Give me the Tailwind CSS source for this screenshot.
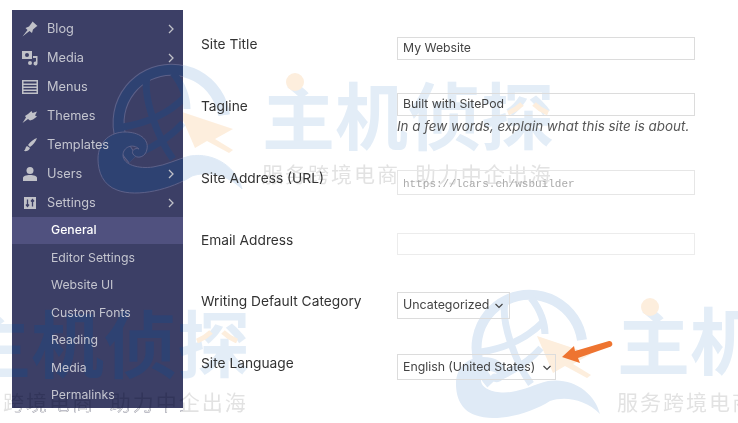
<!doctype html>
<html lang="en"><head><meta charset="utf-8"><title>Settings</title>
<script src="https://cdn.jsdelivr.net/npm/@tailwindcss/browser@4"></script></head>
<body class="bg-white">
<div class="relative w-[738px] h-[423px] overflow-hidden bg-white flex items-start blur-[0.3px] font-['Inter','Open_Sans',sans-serif]">

  <aside class="ml-3 mt-[10px] w-[171px] h-[398px] shrink-0 overflow-hidden bg-[#3c3f66] text-[#c4c5cf]">
    <ul class="relative z-20 pt-[4px] text-[12.75px]">
      <li class="h-[29px] flex items-center pl-[10px] pr-[8px] gap-[9px]"><svg class="w-4 h-4" viewBox="0 0 16 16" fill="#c0c1c8"><path d="M.5 15.500l5-6.500-2-2 3.500-1.500L10 1.500l.5-1 5 4.500-1 .5-3.500 3-1 3.500-2.500-2z"/></svg><span class="flex-1">Blog</span><svg class="w-2 h-2.5" viewBox="0 0 8 10" fill="none" stroke="#c0c1c8" stroke-width="1.300"><path d="M2 1l4 4-4 4"/></svg></li>
      <li class="h-[29px] flex items-center pl-[10px] pr-[8px] gap-[9px]"><svg class="w-4 h-4" viewBox="0 0 16 16" fill="#c0c1c8"><path d="M0 1h10v8H0z"/><circle cx="5" cy="5" r="2" fill="#3c3f66"/><path d="M11 6h4.500v7.500a2 2 0 1 1-1.500-2V8h-3z"/><circle cx="8" cy="13" r="2"/></svg><span class="flex-1">Media</span><svg class="w-2 h-2.5" viewBox="0 0 8 10" fill="none" stroke="#c0c1c8" stroke-width="1.300"><path d="M2 1l4 4-4 4"/></svg></li>
      <li class="h-[29px] flex items-center pl-[10px] pr-[8px] gap-[9px]"><svg class="w-4 h-4" viewBox="0 0 16 16" fill="#c0c1c8"><path fill-rule="evenodd" d="M0 1h16v14H0zM1.500 2.500v2h13v-2zM1.500 6v1.500h13V6zM1.500 9v1.500h13V9zM1.500 12v1.500h13V12z"/></svg><span class="flex-1">Menus</span></li>
      <li class="h-[29px] flex items-center pl-[10px] pr-[8px] gap-[9px]"><svg class="w-4 h-4" viewBox="0 0 16 16" fill="#c0c1c8"><path d="M.5 15l3.500-5.500L3 8l3-2 3.500-3 1 2 4.500-1.500-2 4 2 1-4 3-3 1-2-1.500z"/></svg><span class="flex-1">Themes</span></li>
      <li class="h-[29px] flex items-center pl-[10px] pr-[8px] gap-[9px]"><svg class="w-4 h-4" viewBox="0 0 16 16" fill="#c0c1c8"><path d="M15 1c-3 1-7 4-9 7l2 2c3-2 6-6 7-9zM5 9c-2 1-1 3-3 5 2 .5 5 0 6-3z"/></svg><span class="flex-1">Templates</span></li>
      <li class="h-[29px] flex items-center pl-[10px] pr-[8px] gap-[9px]"><svg class="w-4 h-4" viewBox="0 0 16 16" fill="#c0c1c8"><circle cx="8" cy="4.500" r="3.500"/><path d="M1 15v-3c0-2 3-3 7-3s7 1 7 3v3z"/></svg><span class="flex-1">Users</span><svg class="w-2 h-2.5" viewBox="0 0 8 10" fill="none" stroke="#c0c1c8" stroke-width="1.300"><path d="M2 1l4 4-4 4"/></svg></li>
      <li class="h-[29px] flex items-center pl-[10px] pr-[8px] gap-[9px]"><svg class="w-4 h-4" viewBox="0 0 16 16"><path fill="#c0c1c8" d="M2 2h12v12H2z"/><path stroke="#3c3f66" stroke-width="1.300" fill="none" d="M5.500 4.500v7M4 9.500l1.500 2 1.500-2M10.500 11.500v-7M9 6.500l1.500-2 1.500 2"/></svg><span class="flex-1">Settings</span><svg class="w-2 h-2.5" viewBox="0 0 8 10" fill="none" stroke="#c0c1c8" stroke-width="1.300"><path d="M2 1l4 4-4 4"/></svg></li>
    </ul>
    <ul class="relative z-20 text-[12.25px]">
      <li class="h-[27px] flex items-center pl-[39px] bg-[#50517f] text-white font-medium">General</li>
      <li class="h-[27.5px] flex items-center pl-[39px]">Editor Settings</li>
      <li class="h-[27.5px] flex items-center pl-[39px]">Website UI</li>
      <li class="h-[27.5px] flex items-center pl-[39px]">Custom Fonts</li>
      <li class="h-[27.5px] flex items-center pl-[39px]">Reading</li>
      <li class="h-[27.5px] flex items-center pl-[39px]">Media</li>
      <li class="h-[27.5px] flex items-center pl-[39px]">Permalinks</li>
    </ul>
  </aside>

  <main class="relative z-20 ml-[18px] flex-1 pt-[34px] text-[13.75px] text-[#333]">
    <div class="grid grid-cols-[196px_298px] h-[59px]">
      <label class="leading-5">Site Title</label>
      <div class="pt-[3px]"><input readonly value="My Website" class="w-full h-[23px] px-[5px] pb-[2px] border border-[#dcdcdc] text-[12.25px] text-[#444] bg-transparent outline-none"></div>
    </div>
    <div class="grid grid-cols-[196px_298px] h-[75px]">
      <label class="leading-5 mt-[3px]">Tagline</label>
      <div>
        <input readonly value="Built with SitePod" class="w-full h-[23px] px-[5px] pb-[2px] border border-[#dcdcdc] text-[12.25px] text-[#444] bg-transparent outline-none">
        <p class="italic text-[13.4px] leading-[17px] mt-[2px] text-[#555] whitespace-nowrap">In a few words, explain what this site is about.</p>
      </div>
    </div>
    <div class="grid grid-cols-[196px_298px] h-[62px]">
      <label class="leading-5">Site Address (URL)</label>
      <div class="pt-[2px]"><input readonly value="https://lcars.ch/wsbuilder" class="w-full h-[25px] pl-[5px] pt-[3px] border border-[#e6e6e6] font-['Liberation_Mono',monospace] text-[11px] text-[#aaa] bg-transparent outline-none"></div>
    </div>
    <div class="grid grid-cols-[196px_298px] h-[61px]">
      <label class="leading-5">Email Address</label>
      <div class="pt-[3px]"><input readonly class="w-full h-[22px] border border-[#ececec] bg-transparent outline-none"></div>
    </div>
    <div class="grid grid-cols-[196px_298px] h-[62px]">
      <label class="leading-5">Writing Default Category</label>
      <div class="pt-px">
        <div class="w-[113px] h-[27px] px-[5px] flex items-center justify-between border border-[#dcdcdc] text-[12.4px] text-[#444]"><span>Uncategorized</span><svg class="w-2.5 h-2" viewBox="0 0 10 8" fill="none" stroke="#444" stroke-width="1.200"><path d="M1.500 2l3.500 3.500L8.500 2"/></svg></div>
      </div>
    </div>
    <div class="grid grid-cols-[196px_298px] h-[40px]">
      <label class="leading-5">Site Language</label>
      <div class="pt-px">
        <div class="w-[159px] h-[26px] pl-[5px] pr-[3px] pt-px flex items-center justify-between border border-[#dcdcdc] text-[12.3px] text-[#444]"><span>English (United States)</span><svg class="w-2.5 h-2" viewBox="0 0 10 8" fill="none" stroke="#444" stroke-width="1.200"><path d="M1.500 2l3.500 3.500L8.500 2"/></svg></div>
      </div>
    </div>
  </main>

  <!-- annotation arrow -->
  <svg class="absolute z-30 left-[555px] top-[332px] w-[62px] h-[34px]" viewBox="0 0 62 34"><path d="M7 25l12-11 1 5 34-10a3 3 0 0 1 2 5.500L23 26l2 5z" fill="#ee7430"/></svg>

  <!-- watermark tiles lying over the page -->
  <div class="absolute inset-0 z-10 pointer-events-none font-bold font-['Noto_Sans_CJK_SC',sans-serif] whitespace-nowrap">
    <!-- tile 1 -->
    <svg class="absolute left-[97px] top-[67px] w-[145px] h-[127px] overflow-visible" viewBox="0 0 145 127" fill="none">
      <defs>
        <linearGradient id="a" gradientUnits="userSpaceOnUse" x1="0" y1="0" x2="145" y2="0"><stop offset=".593" stop-color="#2e4272"/><stop offset=".593" stop-color="#dfeaf6"/></linearGradient>
        <linearGradient id="o" gradientUnits="userSpaceOnUse" x1="0" y1="0" x2="145" y2="0"><stop offset=".593" stop-color="#3c3f66"/><stop offset=".593" stop-color="#fdeedd"/></linearGradient>
        <linearGradient id="l" gradientUnits="userSpaceOnUse" x1="0" y1="0" x2="145" y2="0"><stop offset=".593" stop-color="#5c6088"/><stop offset=".593" stop-color="#dfeaf6"/></linearGradient>
      </defs>
      <path d="M127 48A53 53 0 1 0 36 92" stroke="url(#l)" stroke-width="12"/>
      <path d="M127 48A53 53 0 1 0 36 92" stroke="url(#a)" stroke-width="10"/>
      <path d="M50 10C46 30 60 70 76 92M76 6c10 12 14 26 14 36M26 60C50 56 70 48 88 30M42 86c14-6 30-14 44-30" stroke="url(#a)" stroke-width="7"/>
      <path d="M82 44l54 18-18 10 18 11-4 3-22-12-12 7z" fill="url(#o)"/>
      <path d="M1 92C1 74 14 65 28 65c14 0 24 7 22 17-1 8-10 11-14 5-2-3 2-7 6-5-6-6-16-2-16 6 0 10 16 14 30 12 14-2 24-8 37-11 25-4 47 12 52 33-15-15-35-18-50-13-20 13-55 22-75 14C6 118 1 105 1 92z" fill="url(#a)" stroke="url(#l)"/>
    </svg>
    <span class="absolute left-[262px] top-[62px] text-[73px] leading-[100px] text-[#e3edf7]">主机侦探</span>
    <svg class="absolute left-[285px] top-[72px] w-5 h-5" viewBox="0 0 20 20"><circle cx="10" cy="10" r="9" fill="#fdeedd"/></svg>
    <svg class="absolute left-[506px] top-[101px] w-11 h-3.5" viewBox="0 0 44 14" fill="none" stroke="#fdeedd" stroke-width="5"><path d="M2 12c5-2 10-5 14-9M42 12c-5-2-10-5-14-9"/></svg>
    <span class="absolute left-[262px] top-[159px] text-[21px] font-normal leading-[28px] tracking-[2px] [word-spacing:8px] text-[#e2e2e2]">服务跨境电商 助力中企出海</span>
    <!-- tile 2 -->
    <span class="absolute left-[-42px] top-[290px] text-[73px] leading-[100px] text-transparent bg-clip-text bg-[linear-gradient(90deg,#e3edf7_54px,#2e4272_54px,#2e4272_225px,#e3edf7_225px)]">主机侦探</span>
    <svg class="absolute left-[195px] top-[329px] w-11 h-3.5" viewBox="0 0 44 14" fill="none" stroke="#fdeedd" stroke-width="5"><path d="M2 12c5-2 10-5 14-9M42 12c-5-2-10-5-14-9"/></svg>
    <span class="absolute left-[-43px] top-[387px] text-[21px] font-normal leading-[28px] tracking-[2px] [word-spacing:8px] text-transparent bg-clip-text bg-[linear-gradient(180deg,transparent_21px,#e2e2e2_21px),linear-gradient(90deg,#e2e2e2_55px,#32355a_55px,#32355a_226px,#e2e2e2_226px)]">服务跨境电商 助力中企出海</span>
    <!-- tile 3 -->
    <svg class="absolute left-[455px] top-[292px] w-[145px] h-[127px] overflow-visible" viewBox="0 0 145 127" fill="none">
      <path d="M127 48A53 53 0 1 0 36 92" stroke="#dfeaf6" stroke-width="10"/>
      <path d="M50 10C46 30 60 70 76 92M76 6c10 12 14 26 14 36M26 60C50 56 70 48 88 30M42 86c14-6 30-14 44-30" stroke="#dfeaf6" stroke-width="7"/>
      <path d="M82 44l54 18-18 10 18 11-4 3-22-12-12 7z" fill="#fdeedd"/>
      <path d="M1 92C1 74 14 65 28 65c14 0 24 7 22 17-1 8-10 11-14 5-2-3 2-7 6-5-6-6-16-2-16 6 0 10 16 14 30 12 14-2 24-8 37-11 25-4 47 12 52 33-15-15-35-18-50-13-20 13-55 22-75 14C6 118 1 105 1 92z" fill="#dfeaf6"/>
    </svg>
    <span class="absolute left-[617px] top-[287px] text-[73px] leading-[100px] text-[#e3edf7]">主机侦探</span>
    <svg class="absolute left-[640px] top-[297px] w-5 h-5" viewBox="0 0 20 20"><circle cx="10" cy="10" r="9" fill="#fdeedd"/></svg>
    <span class="absolute left-[617px] top-[387px] text-[21px] font-normal leading-[28px] tracking-[2px] [word-spacing:8px] text-[#e2e2e2]">服务跨境电商 助力中企出海</span>
  </div>
</div>
</body></html>
